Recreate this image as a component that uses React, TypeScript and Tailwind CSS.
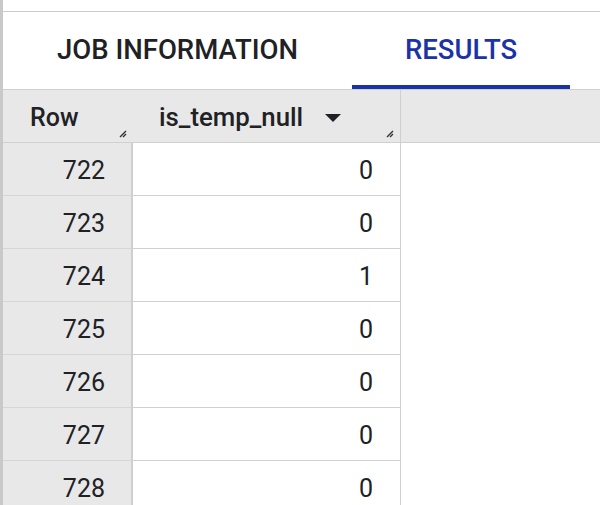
const rows = [
  { n: 722, v: 0 },
  { n: 723, v: 0 },
  { n: 724, v: 1 },
  { n: 725, v: 0 },
  { n: 726, v: 0 },
  { n: 727, v: 0 },
  { n: 728, v: 0 },
];

function ResizeGrip() {
  return (
    <svg width="8" height="8" viewBox="0 0 8 8" className="absolute bottom-[4px] right-[6px]">
      <path d="M1 7 7 1M4 7 7 4" stroke="#333" strokeWidth="1.4" fill="none" />
    </svg>
  );
}

export default function App() {
  return (
    <div
      className="flex h-[505px] w-[600px] flex-col overflow-hidden border-l-[3px] border-[#c9c9c9] bg-white text-[#202124]"
      style={{ fontFamily: "Roboto, 'Liberation Sans', sans-serif" }}
    >
      <div className="h-[12px] shrink-0 border-b border-[#cccccc]" />

      {/* tabs */}
      <div className="flex h-[77px] shrink-0">
        <div className="flex w-[349px] items-center justify-center pb-[2px] text-[27.5px] font-medium">
          JOB INFORMATION
        </div>
        <div className="flex w-[218px] items-center justify-center border-b-[4px] border-[#1b32a8] pt-[2px] text-[27.5px] font-medium text-[#1b32a8]">
          RESULTS
        </div>
      </div>

      {/* header row */}
      <div className="flex h-[54px] shrink-0 border-t border-b border-[#d0d0d0] bg-[#e8e8e8] text-[25px] font-medium">
        <div className="relative flex w-[130px] items-center pl-[27px] pt-[3px]">
          Row
          <ResizeGrip />
        </div>
        <div className="relative flex w-[268px] items-center border-r border-[#cfcfcf] pl-[26px] pt-[3px] text-[25.8px]">
          is_temp_null
          <svg width="16" height="10" viewBox="0 0 16 10" className="ml-[22px]">
            <path d="M0 1h16L8 9z" fill="#202124" />
          </svg>
          <ResizeGrip />
        </div>
        <div className="flex-1" />
      </div>

      {/* body */}
      <div className="flex flex-col text-[25px]">
        {rows.map((r) => (
          <div key={r.n} className="flex h-[53px] shrink-0">
            <div className="flex w-[130px] items-center justify-end border-b border-r-2 border-b-[#d6d6d6] border-r-[#cfcfcf] bg-[#e8e8e8] pr-[26px] pt-[3px]">
              {r.n}
            </div>
            <div className="flex w-[268px] items-center justify-end border-b border-r border-[#d0d0d0] pr-[27px] pt-[3px]">
              {r.v}
            </div>
          </div>
        ))}
      </div>
    </div>
  );
}
